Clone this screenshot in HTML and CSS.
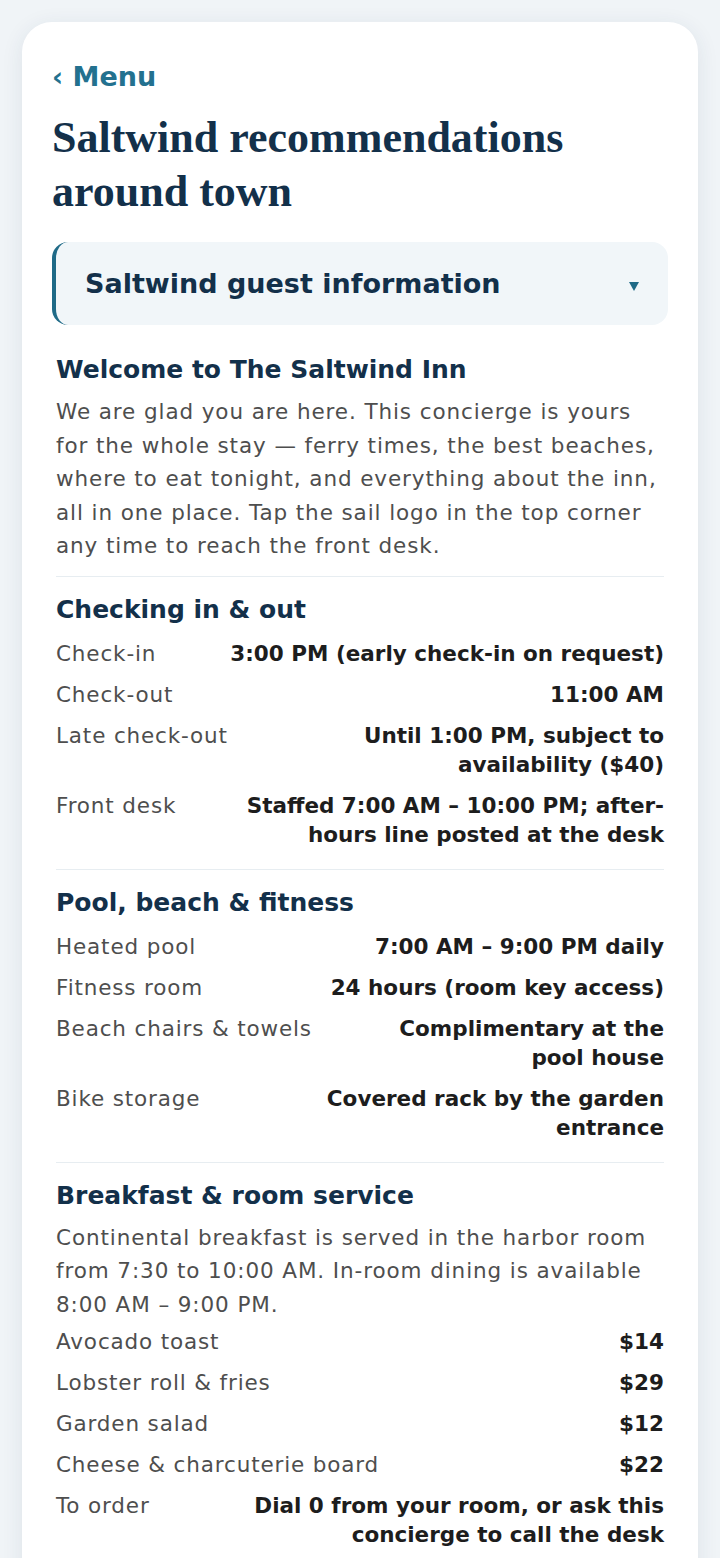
FILE: index.html
```html
<!DOCTYPE html>
<html>
<head>
    <title>Saltwind recommendations around town</title>
    <link rel="stylesheet" href="styles.css">
</head>
<body>
    <div class="card">
        <a class="back-link" href="#">‹ Menu</a>
        <h1>Saltwind recommendations around town</h1>

        <div class="accordion">
            <span class="accordion-title">Saltwind guest information</span>
            <span class="caret"></span>
        </div>

        <div class="info">
            <section class="info-section">
                <h2>Welcome to The Saltwind Inn</h2>
                <p>We are glad you are here. This concierge is yours for the whole stay — ferry times, the best beaches, where to eat tonight, and everything about the inn, all in one place. Tap the sail logo in the top corner any time to reach the front desk.</p>
            </section>

            <section class="info-section">
                <h2>Checking in &amp; out</h2>
                <div class="row"><span class="label">Check-in</span><span class="value">3:00 PM (early check-in on request)</span></div>
                <div class="row"><span class="label">Check-out</span><span class="value">11:00 AM</span></div>
                <div class="row"><span class="label">Late check-out</span><span class="value">Until 1:00 PM, subject to availability ($40)</span></div>
                <div class="row"><span class="label">Front desk</span><span class="value">Staffed 7:00 AM – 10:00 PM; after-hours line posted at the desk</span></div>
            </section>

            <section class="info-section">
                <h2>Pool, beach &amp; fitness</h2>
                <div class="row"><span class="label">Heated pool</span><span class="value">7:00 AM – 9:00 PM daily</span></div>
                <div class="row"><span class="label">Fitness room</span><span class="value">24 hours (room key access)</span></div>
                <div class="row"><span class="label">Beach chairs &amp; towels</span><span class="value">Complimentary at the pool house</span></div>
                <div class="row"><span class="label">Bike storage</span><span class="value">Covered rack by the garden entrance</span></div>
            </section>

            <section class="info-section">
                <h2>Breakfast &amp; room service</h2>
                <p>Continental breakfast is served in the harbor room from 7:30 to 10:00 AM. In-room dining is available 8:00 AM – 9:00 PM.</p>
                <div class="row"><span class="label">Avocado toast</span><span class="value">$14</span></div>
                <div class="row"><span class="label">Lobster roll &amp; fries</span><span class="value">$29</span></div>
                <div class="row"><span class="label">Garden salad</span><span class="value">$12</span></div>
                <div class="row"><span class="label">Cheese &amp; charcuterie board</span><span class="value">$22</span></div>
                <div class="row"><span class="label">To order</span><span class="value">Dial 0 from your room, or ask this concierge to call the desk</span></div>
            </section>
        </div>
    </div>
</body>
</html>
```

FILE: styles.css
```css
body {
    font-family: "DejaVu Sans", sans-serif;
    margin: 0;
    padding: 22px 22px 0;
    background-color: #f0f4f7;
}
.card {
    background-color: #fff;
    border-radius: 30px;
    box-shadow: 0 4px 22px rgba(30, 60, 90, 0.09);
    padding: 39px 30px 40px;
}
.back-link {
    display: block;
    font-size: 27px;
    line-height: 32px;
    font-weight: bold;
    color: #23718f;
    text-decoration: none;
}
h1 {
    font-family: "Liberation Serif", serif;
    font-size: 44px;
    line-height: 54px;
    font-weight: bold;
    color: #13304a;
    margin: 18px 0 23px;
}
.accordion {
    display: flex;
    align-items: center;
    justify-content: space-between;
    background-color: #f1f6f9;
    border-left: 4px solid #1f6a87;
    border-radius: 16px;
    padding: 24px 29px 24px 29px;
}
.accordion-title {
    font-size: 27px;
    line-height: 35px;
    font-weight: bold;
    color: #13304a;
}
.caret {
    width: 0;
    height: 0;
    border-left: 5px solid transparent;
    border-right: 5px solid transparent;
    border-top: 9px solid #1f6a87;
    margin-top: 6px;
}
.info {
    padding: 0 4px;
    margin-top: 28px;
}
.info-section {
    padding: 16px 0 14px;
    border-bottom: 1px solid #e7edf1;
}
.info-section:first-child {
    padding-top: 0;
    padding-bottom: 13px;
}
.info-section:last-child {
    border-bottom: none;
}
h2 {
    font-size: 25px;
    line-height: 34px;
    font-weight: bold;
    color: #13304a;
    margin: 0 0 6px;
}
p {
    font-size: 21.5px;
    line-height: 33.5px;
    letter-spacing: 0.9px;
    color: #4e4e4e;
    margin: 8px 0 0;
}
.row {
    display: flex;
    justify-content: space-between;
    gap: 28px;
    padding: 6px 0;
    font-size: 21.5px;
    line-height: 29px;
}
.label {
    flex: none;
    letter-spacing: 0.85px;
    color: #4e4e4e;
}
.value {
    text-align: right;
    font-weight: bold;
    color: #1d1d1d;
}
```
